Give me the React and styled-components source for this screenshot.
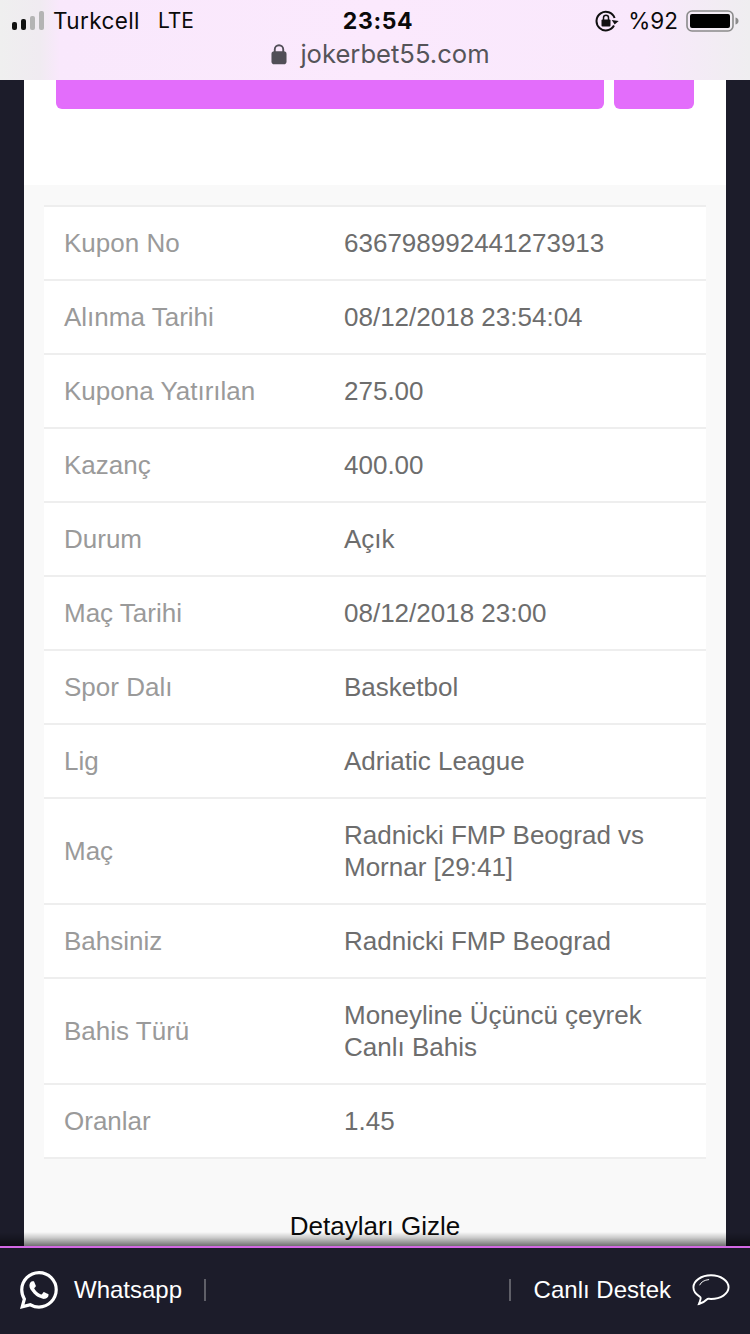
import React from 'react';
import styled, { createGlobalStyle } from 'styled-components';
import { BsWhatsapp } from 'react-icons/bs';

const GlobalStyle = createGlobalStyle`
  html, body {
    margin: 0;
    padding: 0;
    background: #1c1c2a;
    font-family: 'Liberation Sans', Arial, sans-serif;
  }
`;

const Page = styled.div`
  display: flex;
  flex-direction: column;
  width: 750px;
  height: 1334px;
  overflow: hidden;
  background: #1c1c2a;
`;

const TopBar = styled.header`
  flex-shrink: 0;
  height: 80px;
  box-sizing: border-box;
  padding: 0 10px 0 12px;
  background: linear-gradient(90deg, #efefef 0, #f0ebf1 40px, #f9e8fc 60px, #fbe9fd 50%, #f9e8fc 86%, #efeef0 100%);
`;

const StatusRow = styled.div`
  display: grid;
  grid-template-columns: 1fr auto 1fr;
  align-items: center;
  height: 41px;
  color: #0a0a0a;
  font-family: Inter, 'Liberation Sans', sans-serif;
  font-size: 22.5px;
`;

const StatusLeft = styled.div`
  display: flex;
  align-items: center;
`;

const Carrier = styled.span`
  margin-left: 8px;
  letter-spacing: 0.4px;
`;

const Network = styled.span`
  margin-left: 18px;
  font-size: 21px;
`;

const Clock = styled.div`
  padding-left: 4px;
  font-weight: 700;
  font-size: 23px;
  letter-spacing: 0.6px;
`;

const StatusRight = styled.div`
  display: flex;
  align-items: center;
  justify-content: flex-end;
`;

const Percent = styled.span`
  margin: 0 8px 0 9px;
`;

const UrlRow = styled.div`
  display: flex;
  align-items: center;
  justify-content: center;
  gap: 13px;
  margin-top: -3px;
  padding-left: 9px;
  color: #555459;
  font-family: Inter, 'Liberation Sans', sans-serif;
  font-size: 25.6px;
`;

const Main = styled.main`
  flex: 1;
  min-height: 0;
  margin: 0 24px;
  background: #f9f9f9;
`;

const ButtonSection = styled.section`
  display: flex;
  gap: 10px;
  height: 105px;
  box-sizing: border-box;
  padding: 0 32px;
  background: #fff;
`;

const PinkButton = styled.div`
  flex: ${p => (p.$wide ? 1 : '0 0 80px')};
  height: 29px;
  background: #e36dfb;
  border-radius: 0 0 6px 6px;
`;

const Details = styled.section`
  padding: 20px 20px 0;
`;

const Table = styled.div`
  background: #fff;
  border-top: 2px solid #eeeeee;
`;

const Row = styled.div`
  display: grid;
  grid-template-columns: 280px 1fr;
  align-items: center;
  padding: 20px;
  border-bottom: 2px solid #eeeeee;
  font-size: 26px;
  line-height: 32px;
`;

const Label = styled.div`
  color: #9a9a9a;
`;

const Value = styled.div`
  color: #6d6d6d;
`;

const Toggle = styled.div`
  margin-top: 52px;
  text-align: center;
  color: #0a0a0a;
  font-size: 26px;
  line-height: 30px;
`;

const Footer = styled.footer`
  position: relative;
  flex-shrink: 0;
  display: flex;
  align-items: center;
  justify-content: space-between;
  height: 88px;
  box-sizing: border-box;
  padding: 0 20px 2px;
  background: #1c1c2a;
  border-top: 2px solid #d368e4;
  color: #fff;
  font-size: 24px;

  &::before {
    content: '';
    position: absolute;
    left: 0;
    right: 0;
    top: -16px;
    height: 14px;
    background: linear-gradient(180deg, rgba(0, 0, 0, 0), rgba(0, 0, 0, 0.18) 40%, rgba(0, 0, 0, 0.55));
  }
`;

const FooterLink = styled.div`
  display: flex;
  align-items: center;
  gap: ${p => (p.$right ? '21px' : '16px')};
`;

const FooterText = styled.span`
  margin-left: ${p => (p.$right ? '2px' : '0')};
`;

const Divider = styled.span`
  width: 2px;
  height: 22px;
  margin-left: ${p => (p.$right ? '0' : '6px')};
  background: #5f5f68;
`;

const rows = [
  ['Kupon No', '636798992441273913'],
  ['Alınma Tarihi', '08/12/2018 23:54:04'],
  ['Kupona Yatırılan', '275.00'],
  ['Kazanç', '400.00'],
  ['Durum', 'Açık'],
  ['Maç Tarihi', '08/12/2018 23:00'],
  ['Spor Dalı', 'Basketbol'],
  ['Lig', 'Adriatic League'],
  ['Maç', 'Radnicki FMP Beograd vs Mornar [29:41]'],
  ['Bahsiniz', 'Radnicki FMP Beograd'],
  ['Bahis Türü', 'Moneyline Üçüncü çeyrek Canlı Bahis'],
  ['Oranlar', '1.45'],
];

const SignalIcon = () => (
  <svg width="33" height="20" viewBox="0 0 33 20">
    <rect x="0" y="11" width="5" height="8" rx="2" fill="#111" />
    <rect x="9" y="8" width="5" height="11" rx="2" fill="#111" />
    <rect x="18" y="5" width="5" height="14" rx="2" fill="#b4b4b4" />
    <rect x="27" y="0" width="5" height="19" rx="2" fill="#b4b4b4" />
  </svg>
);

const RotationLockIcon = () => (
  <svg width="24" height="22" viewBox="0 0 24 22">
    <path d="M19 15.5A9.3 9.3 0 1 1 19.6 8" fill="none" stroke="#111" strokeWidth="2" />
    <path d="M16.5 10.5h7l-3.5 4z" fill="#111" transform="rotate(8 20 12)" />
    <rect x="6.5" y="9.5" width="9" height="7" rx="1" fill="#111" />
    <path d="M8.5 10V7.8a2.5 2.5 0 0 1 5 0V10" fill="none" stroke="#111" strokeWidth="1.5" />
  </svg>
);

const BatteryIcon = () => (
  <svg width="54" height="24" viewBox="0 0 54 24">
    <rect x="1" y="2" width="46" height="20" rx="5" fill="none" stroke="#8b8b8b" strokeWidth="1.6" />
    <rect x="4" y="5" width="40" height="14" rx="2" fill="#000" />
    <path d="M49.5 8.5c2 .4 3 1.8 3 3.5s-1 3.1-3 3.5z" fill="#8b8b8b" />
  </svg>
);

const LockIcon = () => (
  <svg width="16" height="22" viewBox="0 0 17 22">
    <rect x="0.5" y="8" width="16" height="14" rx="3" fill="#514e57" />
    <path d="M4 9V6.2a4.500 4.500 0 0 1 9 0V9" fill="none" stroke="#514e57" strokeWidth="2" />
  </svg>
);

const ChatIcon = () => (
  <svg width="38" height="34" viewBox="0 0 40 34">
    <path
      d="M20 1.500C9.800 1.500 1.500 7.300 1.500 14.200c0 4 2.800 7.500 6.600 9.700.8.500 1.200 1.200 1 2.200-.3 1.700-1 3.600-1.800 5.600 3.600-.9 6.600-3 8.600-5 .4-.4.9-.5 1.400-.5 1 .1 1.700.2 2.700.2 10.200 0 18.500-5.300 18.500-12.200S30.200 1.500 20 1.500z"
      fill="none"
      stroke="#fff"
      strokeWidth="2"
    />
    <path d="M8 12c1.500-3.500 5-5.500 10-6" fill="none" stroke="#fff" strokeWidth="1" />
  </svg>
);

const App = () => (
  <Page>
    <GlobalStyle />
    <TopBar>
      <StatusRow>
        <StatusLeft>
          <SignalIcon />
          <Carrier>Turkcell</Carrier>
          <Network>LTE</Network>
        </StatusLeft>
        <Clock>23:54</Clock>
        <StatusRight>
          <RotationLockIcon />
          <Percent>%92</Percent>
          <BatteryIcon />
        </StatusRight>
      </StatusRow>
      <UrlRow>
        <LockIcon />
        <span>jokerbet55.com</span>
      </UrlRow>
    </TopBar>
    <Main>
      <ButtonSection>
        <PinkButton $wide />
        <PinkButton />
      </ButtonSection>
      <Details>
        <Table>
          {rows.map(([label, value]) => (
            <Row key={label}>
              <Label>{label}</Label>
              <Value>{value}</Value>
            </Row>
          ))}
        </Table>
        <Toggle>Detayları Gizle</Toggle>
      </Details>
    </Main>
    <Footer>
      <FooterLink>
        <BsWhatsapp size={38} />
        <span>Whatsapp</span>
        <Divider />
      </FooterLink>
      <FooterLink $right>
        <Divider $right />
        <FooterText $right>Canlı Destek</FooterText>
        <ChatIcon />
      </FooterLink>
    </Footer>
  </Page>
);

export default App;
